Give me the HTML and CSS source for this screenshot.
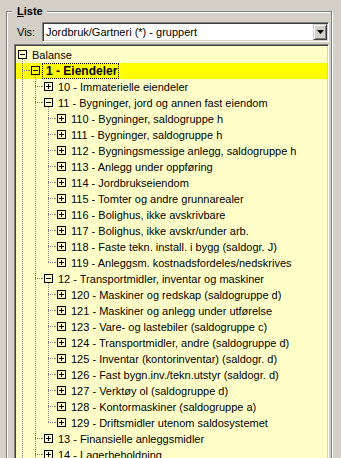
FILE: index.html
```html
<!DOCTYPE html>
<html>
<head>
<meta charset="utf-8">
<link rel="stylesheet" href="styles.css">
</head>
<body>
<div class="group">
  <div class="title"><u>L</u>iste</div>
  <div class="visrow">
    <span class="vislabel">Vis:</span>
    <div class="combo">
      <span class="combo-text">Jordbruk/Gartneri (*) - gruppert</span>
      <span class="combo-btn"><svg width="7" height="4" viewBox="0 0 7 4"><polygon points="0,0 7,0 3.5,4" fill="#000"/></svg></span>
    </div>
  </div>
  <div class="tree">
    <div class="r"><i class="n open"><b class="b"></b></i><span class="lb">Balanse</span></div>
    <div class="r hl"><i class="g t"></i><i class="n sub open"><b class="b"></b></i><span class="lb sel">1 - Eiendeler</span></div>
    <div class="r"><i class="g p"></i><i class="g t"></i><i class="n sub"><b class="b plus"></b></i><span class="lb">10 - Immaterielle eiendeler</span></div>
    <div class="r"><i class="g p"></i><i class="g t"></i><i class="n sub open"><b class="b"></b></i><span class="lb">11 - Bygninger, jord og annen fast eiendom</span></div>
    <div class="r"><i class="g p"></i><i class="g p"></i><i class="g t"></i><i class="n sub"><b class="b plus"></b></i><span class="lb">110 - Bygninger, saldogruppe h</span></div>
    <div class="r"><i class="g p"></i><i class="g p"></i><i class="g t"></i><i class="n sub"><b class="b plus"></b></i><span class="lb">111 - Bygninger, saldogruppe h</span></div>
    <div class="r"><i class="g p"></i><i class="g p"></i><i class="g t"></i><i class="n sub"><b class="b plus"></b></i><span class="lb">112 - Bygningsmessige anlegg, saldogruppe h</span></div>
    <div class="r"><i class="g p"></i><i class="g p"></i><i class="g t"></i><i class="n sub"><b class="b plus"></b></i><span class="lb">113 - Anlegg under oppføring</span></div>
    <div class="r"><i class="g p"></i><i class="g p"></i><i class="g t"></i><i class="n sub"><b class="b plus"></b></i><span class="lb">114 - Jordbrukseiendom</span></div>
    <div class="r"><i class="g p"></i><i class="g p"></i><i class="g t"></i><i class="n sub"><b class="b plus"></b></i><span class="lb">115 - Tomter og andre grunnarealer</span></div>
    <div class="r"><i class="g p"></i><i class="g p"></i><i class="g t"></i><i class="n sub"><b class="b plus"></b></i><span class="lb">116 - Bolighus, ikke avskrivbare</span></div>
    <div class="r"><i class="g p"></i><i class="g p"></i><i class="g t"></i><i class="n sub"><b class="b plus"></b></i><span class="lb">117 - Bolighus, ikke avskr/under arb.</span></div>
    <div class="r"><i class="g p"></i><i class="g p"></i><i class="g t"></i><i class="n sub"><b class="b plus"></b></i><span class="lb">118 - Faste tekn. install. i bygg (saldogr. J)</span></div>
    <div class="r"><i class="g p"></i><i class="g p"></i><i class="g e"></i><i class="n sub"><b class="b plus"></b></i><span class="lb">119 - Anleggsm. kostnadsfordeles/nedskrives</span></div>
    <div class="r"><i class="g p"></i><i class="g t"></i><i class="n sub open"><b class="b"></b></i><span class="lb">12 - Transportmidler, inventar og maskiner</span></div>
    <div class="r"><i class="g p"></i><i class="g p"></i><i class="g t"></i><i class="n sub"><b class="b plus"></b></i><span class="lb">120 - Maskiner og redskap (saldogruppe d)</span></div>
    <div class="r"><i class="g p"></i><i class="g p"></i><i class="g t"></i><i class="n sub"><b class="b plus"></b></i><span class="lb">121 - Maskiner og anlegg under utførelse</span></div>
    <div class="r"><i class="g p"></i><i class="g p"></i><i class="g t"></i><i class="n sub"><b class="b plus"></b></i><span class="lb">123 - Vare- og lastebiler (saldogruppe c)</span></div>
    <div class="r"><i class="g p"></i><i class="g p"></i><i class="g t"></i><i class="n sub"><b class="b plus"></b></i><span class="lb">124 - Transportmidler, andre (saldogruppe d)</span></div>
    <div class="r"><i class="g p"></i><i class="g p"></i><i class="g t"></i><i class="n sub"><b class="b plus"></b></i><span class="lb">125 - Inventar (kontorinventar) (saldogr. d)</span></div>
    <div class="r"><i class="g p"></i><i class="g p"></i><i class="g t"></i><i class="n sub"><b class="b plus"></b></i><span class="lb">126 - Fast bygn.inv./tekn.utstyr (saldogr. d)</span></div>
    <div class="r"><i class="g p"></i><i class="g p"></i><i class="g t"></i><i class="n sub"><b class="b plus"></b></i><span class="lb">127 - Verktøy ol (saldogruppe d)</span></div>
    <div class="r"><i class="g p"></i><i class="g p"></i><i class="g t"></i><i class="n sub"><b class="b plus"></b></i><span class="lb">128 - Kontormaskiner (saldogruppe a)</span></div>
    <div class="r"><i class="g p"></i><i class="g p"></i><i class="g e"></i><i class="n sub"><b class="b plus"></b></i><span class="lb">129 - Driftsmidler utenom saldosystemet</span></div>
    <div class="r"><i class="g p"></i><i class="g t"></i><i class="n sub"><b class="b plus"></b></i><span class="lb">13 - Finansielle anleggsmidler</span></div>
    <div class="r"><i class="g p"></i><i class="g t"></i><i class="n sub"><b class="b plus"></b></i><span class="lb">14 - Lagerbeholdning</span></div>
  </div>
</div>
</body>
</html>
```
FILE: styles.css
```css
:root {
  --v: repeating-linear-gradient(180deg, #808080 0 1px, transparent 1px 2px);
  --h: repeating-linear-gradient(90deg, #808080 0 1px, transparent 1px 2px);
}
html, body {
  margin: 0;
  height: 458px;
  overflow: hidden;
}
body {
  background: #d4d0c8;
  font: 11px "Liberation Sans", Arial, sans-serif;
  color: #000;
}
.group {
  margin: 11px 0 0 6px;
  width: 324px;
  height: 480px;
  border: 1px solid #808080;
  box-shadow: inset 1px 1px #fff, 1px 1px #fff;
}
.title {
  width: fit-content;
  margin: -7px 0 0 5px;
  padding: 0 4px 0 5px;
  background: #d4d0c8;
  font-weight: bold;
  line-height: 13px;
}
.title u {
  text-decoration-thickness: 1px;
}
.visrow {
  display: flex;
  align-items: center;
  margin-top: 4px;
  padding-left: 10px;
}
.vislabel {
  width: 25px;
}
.combo {
  display: flex;
  width: 287px;
  height: 20px;
  box-sizing: border-box;
  border: 1px solid;
  border-color: #808080 #fff #fff #808080;
  box-shadow: inset 1px 1px #404040, inset -1px -1px #d4d0c8;
  background: #fff;
  padding: 1px;
}
.combo-text {
  flex: 1;
  padding-left: 2px;
  line-height: 16px;
  white-space: nowrap;
}
.combo-btn {
  width: 14px;
  height: 16px;
  box-sizing: border-box;
  background: #d4d0c8;
  border: 1px solid;
  border-color: #d4d0c8 #404040 #404040 #d4d0c8;
  box-shadow: inset 1px 1px #fff, inset -1px -1px #808080;
  display: flex;
  align-items: center;
  justify-content: center;
}
.combo-btn svg {
  display: block;
}
.tree {
  margin: 2px 0 0 7px;
  width: 315px;
  height: 440px;
  box-sizing: border-box;
  border: 1px solid;
  border-color: #808080 #fff #fff #808080;
  box-shadow: inset 1px 1px #404040, inset -1px -1px #d4d0c8;
  background: #ffffc8;
  padding: 2px 1px 0 1px;
}
.r {
  display: flex;
  height: 16px;
  line-height: 16px;
  white-space: nowrap;
}
.r.hl {
  background: #ffff00;
}
.g, .n {
  display: block;
  flex: none;
  width: 13px;
  height: 16px;
  background-repeat: no-repeat;
}
.p {
  background-image: var(--v);
  background-size: 1px 16px;
  background-position: 6px 0;
}
.t {
  background-image: var(--v), var(--h);
  background-size: 1px 16px, 7px 1px;
  background-position: 6px 0, 6px 7px;
}
.e {
  background-image: var(--v), var(--h);
  background-size: 1px 8px, 7px 1px;
  background-position: 6px 0, 6px 7px;
}
.n {
  box-sizing: border-box;
  padding: 3px 2px 0;
}
.n.sub {
  background-image: var(--h);
  background-size: 2px 1px;
  background-position: 0 7px;
}
.n.open {
  background-image: var(--v);
  background-size: 1px 4px;
  background-position: 6px 12px;
}
.n.sub.open {
  background-image: var(--h), var(--v);
  background-size: 2px 1px, 1px 4px;
  background-position: 0 7px, 6px 12px;
}
.b {
  display: block;
  width: 9px;
  height: 9px;
  box-sizing: border-box;
  border: 1px solid #000;
  background: linear-gradient(#000, #000) center / 5px 1px no-repeat;
}
.b.plus {
  background:
    linear-gradient(#000, #000) center / 5px 1px no-repeat,
    linear-gradient(#000, #000) center / 1px 5px no-repeat;
}
.lb {
  padding-left: 3px;
}
.lb.sel {
  font-weight: bold;
  font-size: 12px;
  line-height: 14px;
  border: 1px dotted #000;
  padding: 0 1px 0 3px;
}
```
